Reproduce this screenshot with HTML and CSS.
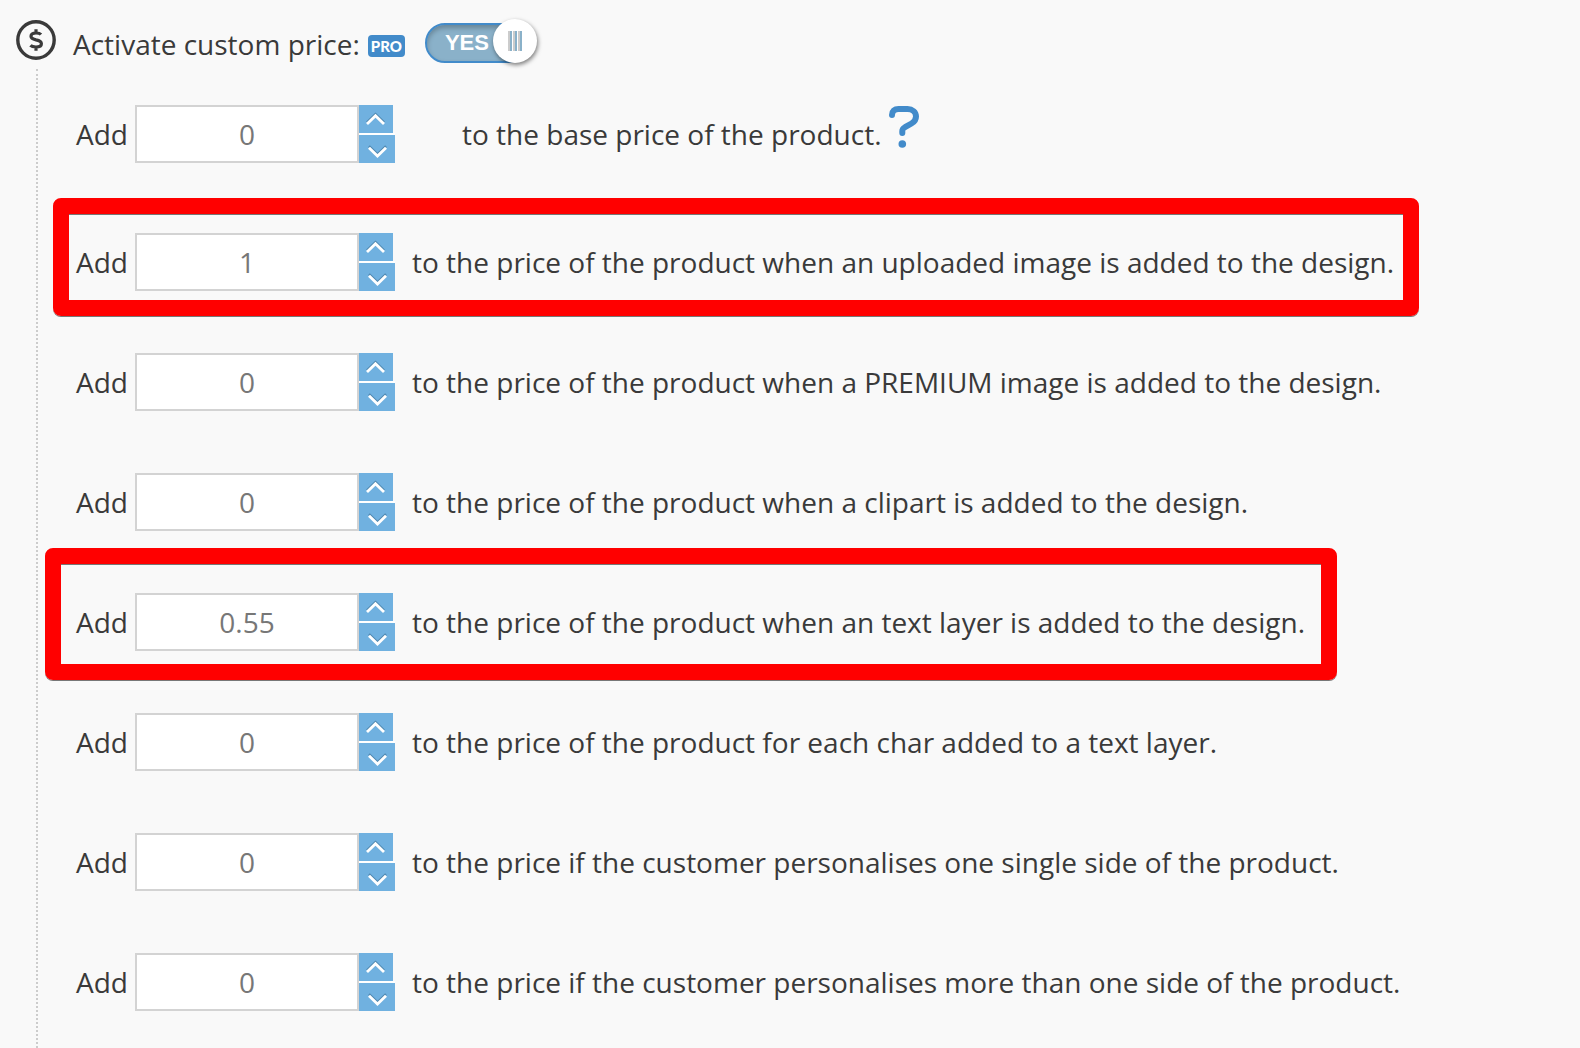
FILE: index.html
```html
<!DOCTYPE html>
<html lang="en">
<head>
<meta charset="utf-8">
<meta name="viewport" content="width=device-width, initial-scale=1">
<title>Custom price</title>
<link rel="stylesheet" href="styles.css">
</head>
<body>
<svg width="0" height="0" class="sprite" aria-hidden="true">
  <symbol id="up" viewBox="0 0 20 14">
    <path d="M1 10.5 L9.5 2.2 L18 10.5" fill="none" stroke="#4f88b0" stroke-width="2.5"/>
    <path d="M1 12 L9.5 3.7 L18 12" fill="none" stroke="#fff" stroke-width="2.8"/>
  </symbol>
  <symbol id="down" viewBox="0 0 20 14">
    <path d="M2 1.2 L10.5 9.5 L19 1.2" fill="none" stroke="#4f88b0" stroke-width="2.5"/>
    <path d="M2 2.7 L10.5 11 L19 2.7" fill="none" stroke="#fff" stroke-width="2.8"/>
  </symbol>
</svg>
<main class="panel">
  <div class="rail">
    <svg class="coin" viewBox="0 0 40 40" aria-hidden="true">
      <circle cx="20" cy="20" r="18.2" fill="none" stroke="#3a3a3a" stroke-width="3.4"/>
      <path d="M25 14.5 C24 13.4 22.4 13 20 13 C17 13 15 14.2 15 16.3 C15 18.6 17 19.2 20 19.9 C23.4 20.6 25.4 21.4 25.4 23.7 C25.4 26 23 27 20 27 C17.4 27 15.6 26.6 14.4 25.4 M20 9.2 V13 M20 27 V30.8" fill="none" stroke="#3a3a3a" stroke-width="3.2"/>
    </svg>
    <div class="line"></div>
  </div>
  <form class="content">
    <div class="header">
      <label for="active">Activate custom price:</label>
      <span class="pro">PRO</span>
      <span class="switch">
        <input type="checkbox" id="active" checked>
        <span class="state">YES</span>
        <span class="knob"><span class="grip"></span></span>
      </span>
    </div>
    <div class="rows">
      <div class="row base">
        <label class="add" for="p1">Add</label>
        <input class="amount" type="number" id="p1" value="0" step="0.01">
        <span class="spin"><button type="button" class="inc" aria-label="Increase"><svg><use href="#up"/></svg></button><button type="button" class="dec" aria-label="Decrease"><svg><use href="#down"/></svg></button></span>
        <span class="text">to the base price of the product.</span>
        <button type="button" class="help" aria-label="Help"><svg viewBox="0 0 30 42"><path d="M3 9 C3 5 5.5 3 9.5 3 H18.5 C23.5 3 27 6.2 27 10.5 C27 14 25.5 15.8 22.5 17.5 L16 21.2 C14 22.4 13.3 23 13.3 25 V27" fill="none" stroke="#428bca" stroke-width="6" stroke-linecap="round"/><circle cx="13.3" cy="38" r="3.8" fill="#428bca"/></svg></button>
      </div>
      <div class="row marked upload">
        <label class="add" for="p2">Add</label>
        <input class="amount" type="number" id="p2" value="1" step="0.01">
        <span class="spin"><button type="button" class="inc" aria-label="Increase"><svg><use href="#up"/></svg></button><button type="button" class="dec" aria-label="Decrease"><svg><use href="#down"/></svg></button></span>
        <span class="text">to the price of the product when an uploaded image is added to the design.</span>
      </div>
      <div class="row">
        <label class="add" for="p3">Add</label>
        <input class="amount" type="number" id="p3" value="0" step="0.01">
        <span class="spin"><button type="button" class="inc" aria-label="Increase"><svg><use href="#up"/></svg></button><button type="button" class="dec" aria-label="Decrease"><svg><use href="#down"/></svg></button></span>
        <span class="text">to the price of the product when a PREMIUM image is added to the design.</span>
      </div>
      <div class="row">
        <label class="add" for="p4">Add</label>
        <input class="amount" type="number" id="p4" value="0" step="0.01">
        <span class="spin"><button type="button" class="inc" aria-label="Increase"><svg><use href="#up"/></svg></button><button type="button" class="dec" aria-label="Decrease"><svg><use href="#down"/></svg></button></span>
        <span class="text">to the price of the product when a clipart is added to the design.</span>
      </div>
      <div class="row marked layer">
        <label class="add" for="p5">Add</label>
        <input class="amount" type="number" id="p5" value="0.55" step="0.01">
        <span class="spin"><button type="button" class="inc" aria-label="Increase"><svg><use href="#up"/></svg></button><button type="button" class="dec" aria-label="Decrease"><svg><use href="#down"/></svg></button></span>
        <span class="text">to the price of the product when an text layer is added to the design.</span>
      </div>
      <div class="row">
        <label class="add" for="p6">Add</label>
        <input class="amount" type="number" id="p6" value="0" step="0.01">
        <span class="spin"><button type="button" class="inc" aria-label="Increase"><svg><use href="#up"/></svg></button><button type="button" class="dec" aria-label="Decrease"><svg><use href="#down"/></svg></button></span>
        <span class="text">to the price of the product for each char added to a text layer.</span>
      </div>
      <div class="row">
        <label class="add" for="p7">Add</label>
        <input class="amount" type="number" id="p7" value="0" step="0.01">
        <span class="spin"><button type="button" class="inc" aria-label="Increase"><svg><use href="#up"/></svg></button><button type="button" class="dec" aria-label="Decrease"><svg><use href="#down"/></svg></button></span>
        <span class="text">to the price if the customer personalises one single side of the product.</span>
      </div>
      <div class="row">
        <label class="add" for="p8">Add</label>
        <input class="amount" type="number" id="p8" value="0" step="0.01">
        <span class="spin"><button type="button" class="inc" aria-label="Increase"><svg><use href="#up"/></svg></button><button type="button" class="dec" aria-label="Decrease"><svg><use href="#down"/></svg></button></span>
        <span class="text">to the price if the customer personalises more than one side of the product.</span>
      </div>
    </div>
  </form>
</main>
</body>
</html>
```
FILE: styles.css
```css
* { box-sizing: border-box; }

body {
  margin: 0;
  background: #f9f9f9;
  color: #3a3a3a;
  font: 28px/38px "Open Sans", "Noto Sans", sans-serif;
}

button {
  padding: 0;
  border: 0;
  background: none;
  cursor: pointer;
}

svg { display: block; }
.sprite { position: absolute; }

.panel {
  display: flex;
  gap: 17px;
  min-height: 100vh;
  padding-left: 16px;
}

.rail {
  display: flex;
  flex-direction: column;
  gap: 9px;
  flex: none;
  width: 40px;
  padding-top: 20px;
}

.coin { width: 40px; height: 40px; }

.line {
  flex: 1;
  margin-left: 20px;
  border-left: 2px dotted #ccc;
}

.content {
  flex: 1;
  padding: 23px 0 37px;
}

.header {
  display: flex;
  align-items: flex-end;
}

.pro {
  margin: 0 20px 6px 8px;
  padding: 0 3px;
  border-radius: 4px;
  background: #428bca;
  color: #fff;
  font-family: Lato, "Open Sans", sans-serif;
  font-size: 15px;
  font-weight: 900;
  line-height: 22px;
}

.switch {
  position: relative;
  display: flex;
  align-items: center;
  width: 112px;
  height: 40px;
}

.switch input {
  position: absolute;
  inset: 0 10px 0 0;
  margin: 0;
  appearance: none;
  border: 2px solid #428bca;
  border-radius: 20px;
  background: #8ab1c9;
  box-shadow: inset 0 3px 5px rgba(0, 0, 0, 0.25);
  cursor: pointer;
}

.state {
  position: relative;
  padding-left: 20px;
  color: #fff;
  font: bold 22px/38px "Liberation Sans", Arial, sans-serif;
  pointer-events: none;
}

.knob {
  position: absolute;
  top: -4px;
  right: 0;
  display: flex;
  align-items: center;
  justify-content: center;
  width: 44px;
  height: 44px;
  border-radius: 50%;
  background: #fff;
  box-shadow: 1px 2px 4px rgba(0, 0, 0, 0.5);
  pointer-events: none;
}

.grip {
  width: 14px;
  height: 20px;
  background: repeating-linear-gradient(90deg, #ccc 0 2px, #8ab1c9 2px 4px, #fff 4px 5px);
}

.rows {
  display: flex;
  flex-direction: column;
  align-items: flex-start;
  gap: 62px;
  padding: 42px 0 0 3px;
}

.row {
  position: relative;
  display: flex;
  align-items: center;
}

.base { margin-bottom: 8px; }

.add { width: 59px; }

.amount {
  width: 224px;
  height: 58px;
  padding: 0;
  border: 2px solid #d3d3d3;
  border-radius: 0;
  background: #fff;
  color: #777;
  font: inherit;
  text-align: center;
  appearance: textfield;
}

.amount::-webkit-inner-spin-button,
.amount::-webkit-outer-spin-button {
  margin: 0;
  appearance: none;
}

.spin {
  display: flex;
  flex-direction: column;
  gap: 2px;
  width: 36px;
  background: linear-gradient(#fff, #fff) 0 28px / 36px 2px no-repeat;
}

.spin button {
  display: flex;
  align-items: center;
  justify-content: center;
  width: 36px;
  height: 28px;
  background: #70b1e0;
}

.spin .inc { width: 34px; }
.spin .dec { padding-top: 6px; }
.spin svg { width: 20px; height: 14px; }

.text { margin-left: 17px; }
.base .text { margin-left: 67px; }

.help {
  align-self: flex-start;
  margin: 1px 0 0 8px;
}

.help svg { width: 30px; height: 42px; }

/* Highlight frames drawn over the rows */
.marked::after {
  content: "";
  position: absolute;
  border: 16px solid #f00;
  border-radius: 8px;
  box-shadow: 0 1px 0 #777, inset 0 1px 0 #777;
  pointer-events: none;
}

.upload::after { inset: -35px -25px -25px -23px; }
.layer::after { inset: -45px -32px -29px -31px; }
```
